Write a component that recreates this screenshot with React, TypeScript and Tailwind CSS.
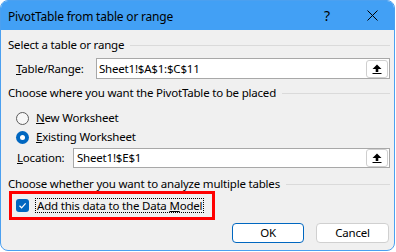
import React from 'react';

const UploadIcon = () => (
  <svg width="10" height="10" viewBox="0 0 10 10">
    <path d="M5 0.5 L9.5 5 L6.3 5 L6.3 8 L3.7 8 L3.7 5 L0.5 5 Z" fill="#000" />
    <rect x="0.5" y="9" width="9" height="1" fill="#000" />
  </svg>
);

const RangeButton = () => (
  <button className="w-[22px] h-[18px] mr-px flex items-center justify-center rounded-[3px] border border-[#cfcfcf] bg-white">
    <UploadIcon />
  </button>
);

const SectionHeader = ({ label, className }: { label: string; className: string }) => (
  <div className={`flex items-center h-4 ${className}`}>
    <span>{label}</span>
    <div className="flex-1 h-px bg-[#dadada] ml-[6px]" />
  </div>
);

const Radio = ({ checked }: { checked?: boolean }) =>
  checked ? (
    <span className="w-[13px] h-[13px] rounded-full bg-[#0067c0] flex items-center justify-center">
      <span className="w-[5px] h-[5px] rounded-full bg-white" />
    </span>
  ) : (
    <span className="w-[13px] h-[13px] rounded-full border border-[#5c5c5c] bg-[#f7f7f7]" />
  );

const App = () => {
  return (
    <div className="w-[396px] h-[252px] bg-white" style={{ fontFamily: '"Noto Sans", sans-serif' }}>
      <div className="w-[395px] h-[251px] border border-[#4ba0f0] rounded-lg overflow-hidden bg-[#f0f0f0] flex flex-col text-[11.5px] tracking-[-0.2px] text-black leading-4">
        {/* title bar */}
        <div className="h-[29px] shrink-0 bg-[#42a0f5] flex items-center pl-[7px]">
          <span className="flex-1 pt-[2px] text-[12px]">PivotTable from table or range</span>
          <span className="w-[16px] text-center text-[14px] mr-[32px]">?</span>
          <svg width="11" height="11" viewBox="0 0 11 11" className="mr-[16px]">
            <path d="M0.5 0.5 L10.5 10.5 M10.5 0.5 L0.5 10.5" stroke="#000" strokeWidth="1" />
          </svg>
        </div>

        <div className="flex flex-col pl-[7px] pr-[4px]">
          <SectionHeader label="Select a table or range" className="mt-[7px]" />

          <div className="flex items-center mt-[5px] pl-[8px]">
            <span className="w-[80px]"><span className="underline">T</span>able/Range:</span>
            <div className="flex-1 h-[21px] border border-[#a8a8a8] bg-white flex items-center">
              <span className="flex-1 pl-[2px]">Sheet1!$A$1:$C$11</span>
              <RangeButton />
            </div>
          </div>

          <SectionHeader label="Choose where you want the PivotTable to be placed" className="mt-[6px]" />

          <div className="flex items-center gap-[7px] mt-[9px] pl-[8px] h-4">
            <Radio />
            <span><span className="underline">N</span>ew Worksheet</span>
          </div>
          <div className="flex items-center gap-[7px] mt-[3px] pl-[8px] h-4">
            <Radio checked />
            <span><span className="underline">E</span>xisting Worksheet</span>
          </div>

          <div className="flex items-center mt-[3px] pl-[9px]">
            <span className="w-[56px]"><span className="underline">L</span>ocation:</span>
            <div className="flex-1 h-[20px] border border-[#a8a8a8] bg-white flex items-center">
              <span className="flex-1 pl-[3px]">Sheet1!$E$1</span>
              <RangeButton />
            </div>
          </div>

          <SectionHeader label="Choose whether you want to analyze multiple tables" className="mt-[8px]" />

          <div className="relative flex items-center mt-[6px] pl-[8px] h-[15px]">
            <span className="w-[13px] h-[13px] rounded-[3px] bg-[#0067c0] flex items-center justify-center">
              <svg width="9" height="9" viewBox="0 0 9 9">
                <path d="M1.5 4.8 L3.6 6.8 L7.6 2.3" stroke="#fff" strokeWidth="1.2" fill="none" />
              </svg>
            </span>
            <span className="ml-[6px] px-[1px] border border-dotted border-black leading-[13px]">
              Add this data to the Data <span className="underline">M</span>odel
            </span>
            <div className="absolute left-[1px] top-[-7px] w-[206px] h-[29px] border-[3px] border-[#ff0000]" />
          </div>

          <div className="flex justify-end gap-[12px] mt-[10px] pr-px">
            <button className="w-[72px] h-[20px] rounded-[4px] border border-[#0067c0] bg-white leading-4">OK</button>
            <button className="w-[73px] h-[20px] rounded-[4px] border border-[#d0d0d0] bg-white leading-4">Cancel</button>
          </div>
        </div>
      </div>
    </div>
  );
};

export default App;
